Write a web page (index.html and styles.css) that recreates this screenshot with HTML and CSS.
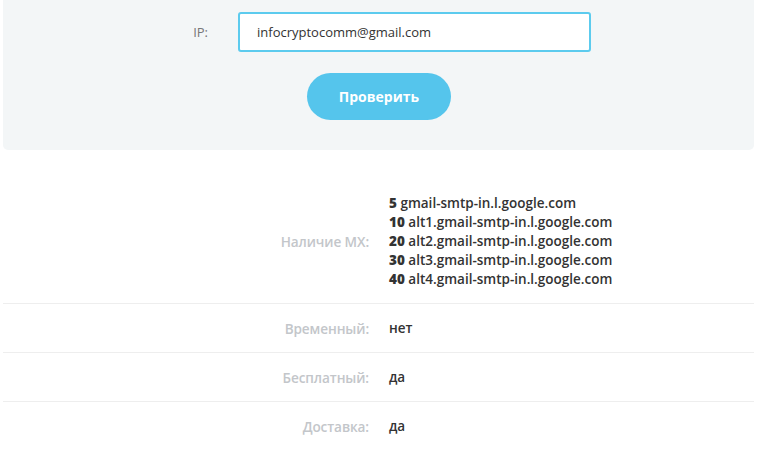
FILE: index.html
```html
<!DOCTYPE html>
<html lang="ru">
<head>
<meta charset="utf-8">
<title>Проверка email</title>
<link rel="stylesheet" href="styles.css">
</head>
<body>
<div class="page">
  <form class="panel">
    <div class="field">
      <label class="field-label" for="ip">IP:</label>
      <input class="field-input" id="ip" type="text" value="infocryptocomm@gmail.com">
    </div>
    <button class="btn" type="button">Проверить</button>
  </form>

  <div class="results">
    <div class="row">
      <div class="label">Наличие MX:</div>
      <div class="value mx">
        <div><b>5</b> gmail-smtp-in.l.google.com</div>
        <div><b>10</b> alt1.gmail-smtp-in.l.google.com</div>
        <div><b>20</b> alt2.gmail-smtp-in.l.google.com</div>
        <div><b>30</b> alt3.gmail-smtp-in.l.google.com</div>
        <div><b>40</b> alt4.gmail-smtp-in.l.google.com</div>
      </div>
    </div>
    <div class="row">
      <div class="label">Временный:</div>
      <div class="value">нет</div>
    </div>
    <div class="row">
      <div class="label">Бесплатный:</div>
      <div class="value">да</div>
    </div>
    <div class="row">
      <div class="label">Доставка:</div>
      <div class="value">да</div>
    </div>
  </div>
</div>
</body>
</html>
```

FILE: styles.css
```css
* { box-sizing: border-box; }
html, body { margin: 0; background: #ffffff; }
body {
  font-family: "Open Sans", "Noto Sans", sans-serif;
  color: #333;
}
.page { padding: 0 8px 0 3px; }

.panel {
  background: #f3f6f7;
  border-radius: 0 0 5px 5px;
  height: 150px;
  padding-top: 12px;
  display: flex;
  flex-direction: column;
  align-items: center;
  margin: 0;
}
.field {
  display: flex;
  align-items: center;
  align-self: stretch;
  gap: 30px;
}
.field-label {
  width: 205px;
  text-align: right;
  font-size: 13px;
  color: #777;
}
.field-input {
  width: 353px;
  height: 40px;
  border: 2px solid #5ccbee;
  border-radius: 3px;
  background: #fff;
  padding: 0 17px;
  font-family: "Open Sans", sans-serif;
  font-size: 13px;
  color: #333;
  outline: none;
}
.btn {
  margin-top: 21px;
  width: 144px;
  height: 47px;
  border: none;
  border-radius: 24px;
  background: #55c5ec;
  color: #fff;
  font-family: "Open Sans", sans-serif;
  font-weight: 700;
  font-size: 14px;
  margin-left: 1px;
}

.results { margin-top: 29px; }
.row {
  display: flex;
  align-items: center;
  gap: 20px;
  padding: 15px 0 14px;
  border-bottom: 1px solid #eeeeee;
  line-height: 19px;
}
.row:last-child { border-bottom: none; }
.label {
  width: 366px;
  text-align: right;
  font-size: 13.6px;
  font-weight: 600;
  color: #c3c6ca;
  letter-spacing: -0.1px;
}
.value {
  font-size: 13.5px;
  font-weight: 600;
  color: #333;
}
.mx b { font-weight: 800; }
```
